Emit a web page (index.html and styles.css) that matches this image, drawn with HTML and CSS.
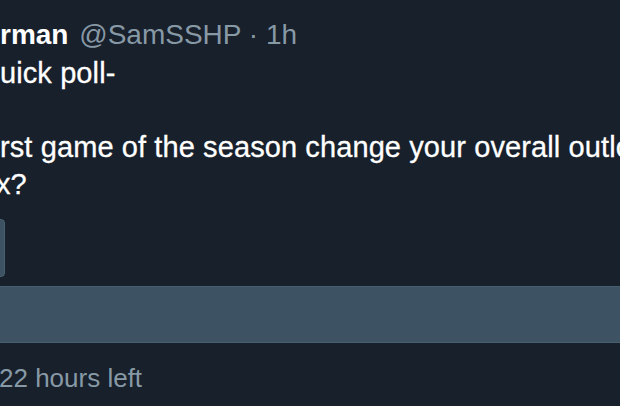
FILE: index.html
```html
<!DOCTYPE html>
<html lang="en">
<head>
    <meta charset="UTF-8">
    <meta name="viewport" content="width=device-width, initial-scale=1.0">
    <title>Quick poll</title>
    <link rel="stylesheet" href="styles.css">
</head>
<body>

    <div class="tweet">
        <div class="tweet-header">
            <span class="name">rman</span>
            <span class="handle">@SamSSHP</span>
            <span class="dot">·</span>
            <span class="time">1h</span>
        </div>

        <div class="tweet-text">
            <div class="line">uick poll-</div>
            <div class="line">&nbsp;</div>
            <div class="line">rst game of the season change your overall outlook</div>
            <div class="line cut">x?</div>
        </div>

        <div class="poll">
            <div class="poll-option first">
                <div class="poll-bar" style="width: 11px;"></div>
            </div>
            <div class="poll-option second">
                <div class="poll-bar" style="width: 100%;"></div>
            </div>
        </div>

        <div class="poll-footer">22 hours left</div>
    </div>

</body>
</html>
```

FILE: styles.css
```css
html, body {
    margin: 0;
    padding: 0;
    background-color: #17202b;
    overflow: hidden;
}

body {
    font-family: "Liberation Sans", Arial, sans-serif;
    font-size: 28px;
    line-height: 37px;
    color: #ffffff;
}

.tweet {
    padding-top: 16px;
    width: 620px;
}

.tweet-header {
    white-space: nowrap;
    margin-bottom: 2px;
}

.name {
    font-weight: bold;
    color: #ffffff;
}

.handle {
    color: #8899a6;
    margin-left: 3px;
}

.dot,
.time {
    color: #8899a6;
}

.tweet-text {
    font-size: 29px;
    letter-spacing: 0.1px;
}

.tweet-text .line {
    white-space: nowrap;
    -webkit-text-stroke: 0.3px #ffffff;
}

.tweet-text .cut {
    text-indent: -4px;
}

.poll {
    margin-top: 16px;
    display: flex;
    flex-direction: column;
    gap: 9px;
}

.poll-option {
    margin-left: -6px;
}

.poll-option.first {
    height: 58px;
}

.poll-option.second {
    height: 57px;
    margin-right: -20px;
}

.poll-bar {
    height: 100%;
    background-color: #3d5363;
    border-radius: 4px;
    box-sizing: border-box;
    border: 1px solid #46606f;
}

.poll-footer {
    margin-top: 17px;
    font-size: 26px;
    color: #8899a6;
    white-space: nowrap;
    text-indent: -1px;
}
```
